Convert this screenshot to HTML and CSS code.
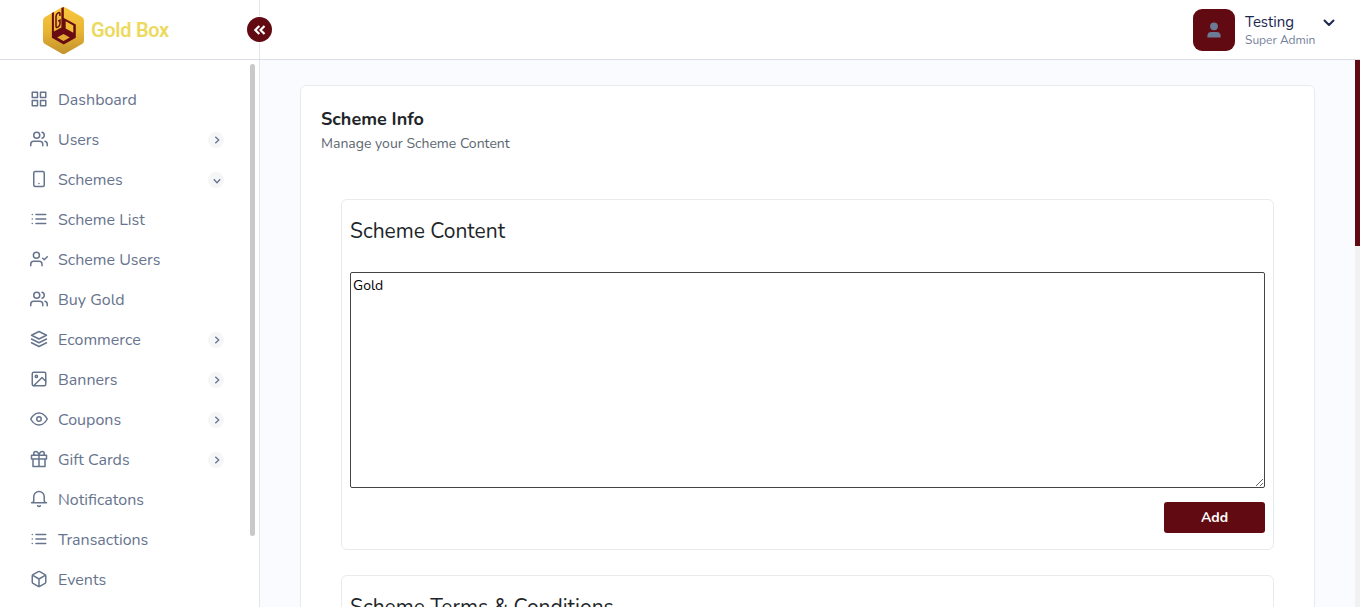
FILE: index.html
```html
<!DOCTYPE html>
<html lang="en">
<head>
<meta charset="utf-8">
<title>Gold Box</title>
<link rel="stylesheet" href="styles.css">
</head>
<body>
<header class="header">
  <div class="brand">
    <svg class="brand-mark" viewBox="0 0 41 47">
      <defs><linearGradient id="gold" x1="0" y1="0" x2="0" y2="1"><stop offset="0" stop-color="#f8c73c"/><stop offset=".5" stop-color="#e9b634"/><stop offset="1" stop-color="#c3922c"/></linearGradient></defs>
      <path d="M18.500.6q2-1.100 4 0l16.500 9.500q2 1.200 2 3.500v19.800q0 2.300-2 3.500l-16.500 9.500q-2 1.100-4 0L2 36.900q-2-1.200-2-3.500V13.600q0-2.300 2-3.500z" fill="url(#gold)"/>
      <path d="M8.900 6l2-1v19.500l7.500-4V1l2.400-1v11l12 6.500v13.300L20.700 37.400 8.900 30.800z" fill="#680b12"/>
      <path d="M22.700 14.300l7.600 4.100v7.300l-7.600-4.100z" fill="#f1bd37"/>
      <path d="M20.500 27l6.300 3.400-6.300 3.500-6.300-3.500z" fill="#e0ad32"/>
      <path d="M16.900 9V6.600q0-1.500-1.700-.7-2.200 1-2.200 3.600v9.400q0 2.200 1.900 1.200 2.100-1.100 2.100-3.400v-3.500l-1.900 1" fill="none" stroke="#680b12" stroke-width="1.500"/>
    </svg>
    <span class="brand-name">Gold Box</span>
  </div>
  <div class="profile">
    <span class="avatar"><svg viewBox="0 0 14 16"><circle cx="7" cy="4.300" r="3.900"/><path d="M.4 15.500v-1.500q0-4 4-4h5.200q4 0 4 4v1.500z"/></svg></span>
    <span class="profile-text"><span class="profile-name">Testing</span><span class="profile-role">Super Admin</span></span>
    <svg class="profile-caret" viewBox="0 0 12 8"><path d="M1.500 1.500L6 6l4.500-4.500"/></svg>
  </div>
  <button class="collapse" aria-label="Collapse menu"><svg viewBox="0 0 12 10"><path d="M5.300.9L1.300 5l4 4.100M10.500.9L6.500 5l4 4.100"/></svg></button>
</header>
<div class="shell">
  <aside class="sidebar">
    <nav class="menu">
      <a class="item"><svg class="icon" viewBox="0 0 24 24"><path d="M3 3h7v7H3zM14 3h7v7h-7zM14 14h7v7h-7zM3 14h7v7H3z"/></svg><span class="label">Dashboard</span></a>
      <a class="item"><svg class="icon" viewBox="0 0 24 24"><path d="M17 21v-2a4 4 0 0 0-4-4H5a4 4 0 0 0-4 4v2M23 21v-2a4 4 0 0 0-3-3.870M16 3.130a4 4 0 0 1 0 7.750"/><circle cx="9" cy="7" r="4"/></svg><span class="label">Users</span><span class="arrow"><svg viewBox="0 0 8 8"><path d="M2.300 .8L5.700 4 2.300 7.200"/></svg></span></a>
      <a class="item"><svg class="icon" viewBox="0 0 24 24"><rect x="5" y="2" width="14" height="20" rx="2"/><path d="M12 18h.01"/></svg><span class="label">Schemes</span><span class="arrow open"><svg viewBox="0 0 8 8"><path d="M2.300 .8L5.700 4 2.300 7.200"/></svg></span></a>
      <a class="item"><svg class="icon" viewBox="0 0 24 24"><path d="M8 6h13M8 12h13M8 18h13M3 6h.01M3 12h.01M3 18h.01"/></svg><span class="label">Scheme List</span></a>
      <a class="item"><svg class="icon" viewBox="0 0 24 24"><path d="M16 21v-2a4 4 0 0 0-4-4H5a4 4 0 0 0-4 4v2M17 11l2 2 4-4"/><circle cx="8.500" cy="7" r="4"/></svg><span class="label">Scheme Users</span></a>
      <a class="item"><svg class="icon" viewBox="0 0 24 24"><path d="M17 21v-2a4 4 0 0 0-4-4H5a4 4 0 0 0-4 4v2M23 21v-2a4 4 0 0 0-3-3.870M16 3.130a4 4 0 0 1 0 7.750"/><circle cx="9" cy="7" r="4"/></svg><span class="label">Buy Gold</span></a>
      <a class="item"><svg class="icon" viewBox="0 0 24 24"><path d="M12 2L2 7l10 5 10-5zM2 17l10 5 10-5M2 12l10 5 10-5"/></svg><span class="label">Ecommerce</span><span class="arrow"><svg viewBox="0 0 8 8"><path d="M2.300 .8L5.700 4 2.300 7.200"/></svg></span></a>
      <a class="item"><svg class="icon" viewBox="0 0 24 24"><rect x="3" y="3" width="18" height="18" rx="2"/><circle cx="8.500" cy="8.500" r="1.500"/><path d="M21 15l-5-5L5 21"/></svg><span class="label">Banners</span><span class="arrow"><svg viewBox="0 0 8 8"><path d="M2.300 .8L5.700 4 2.300 7.200"/></svg></span></a>
      <a class="item"><svg class="icon" viewBox="0 0 24 24"><path d="M1 12s4-8 11-8 11 8 11 8-4 8-11 8-11-8-11-8z"/><circle cx="12" cy="12" r="3"/></svg><span class="label">Coupons</span><span class="arrow"><svg viewBox="0 0 8 8"><path d="M2.300 .8L5.700 4 2.300 7.200"/></svg></span></a>
      <a class="item"><svg class="icon" viewBox="0 0 24 24"><path d="M20 12v10H4V12M2 7h20v5H2zM12 22V7M12 7H7.500a2.500 2.500 0 0 1 0-5C11 2 12 7 12 7zM12 7h4.500a2.500 2.500 0 0 0 0-5C13 2 12 7 12 7z"/></svg><span class="label">Gift Cards</span><span class="arrow"><svg viewBox="0 0 8 8"><path d="M2.300 .8L5.700 4 2.300 7.200"/></svg></span></a>
      <a class="item"><svg class="icon" viewBox="0 0 24 24"><path d="M22 17H2a3 3 0 0 0 3-3V9a7 7 0 0 1 14 0v5a3 3 0 0 0 3 3zM13.730 21a2 2 0 0 1-3.460 0"/></svg><span class="label">Notificatons</span></a>
      <a class="item"><svg class="icon" viewBox="0 0 24 24"><path d="M8 6h13M8 12h13M8 18h13M3 6h.01M3 12h.01M3 18h.01"/></svg><span class="label">Transactions</span></a>
      <a class="item"><svg class="icon" viewBox="0 0 24 24"><path d="M21 16V8a2 2 0 0 0-1-1.730l-7-4a2 2 0 0 0-2 0l-7 4A2 2 0 0 0 3 8v8a2 2 0 0 0 1 1.730l7 4a2 2 0 0 0 2 0l7-4A2 2 0 0 0 21 16zM3.270 6.960L12 12.010l8.730-5.050M12 22.080V12"/></svg><span class="label">Events</span></a>
    </nav>
    <div class="side-thumb"></div>
  </aside>
  <main class="main">
    <section class="card">
      <h1 class="title">Scheme Info</h1>
      <p class="subtitle">Manage your Scheme Content</p>
      <div class="panel">
        <h2 class="panel-title">Scheme Content</h2>
        <textarea class="editor">Gold</textarea>
        <div class="actions"><button class="add">Add</button></div>
      </div>
      <div class="panel">
        <h2 class="panel-title">Scheme Terms &amp; Conditions</h2>
      </div>
    </section>
  </main>
  <div class="page-track"><div class="page-thumb"></div></div>
</div>
</body>
</html>
```
FILE: styles.css
```css
* { box-sizing: border-box; }
body { margin: 0; height: 607px; overflow: hidden; font-family: Nunito, Lato, sans-serif; background: #fafbfe; color: #212529; }
svg { display: block; }
.header { position: relative; display: flex; justify-content: space-between; height: 60px; background: #fff; border-bottom: 1px solid #dbdfe5; }
.brand { display: flex; align-items: center; width: 260px; padding-left: 43px; gap: 7px; border-right: 1px solid #e3e5e9; }
.brand-mark { width: 41px; height: 47px; margin-top: 1px; }
.brand-name { font: 600 20px/24px Roboto, sans-serif; color: #ecda5e; letter-spacing: -.3px; margin-top: 1px; }
.collapse { position: absolute; left: 247px; top: 17px; width: 25px; height: 25px; border: 0; border-radius: 50%; padding: 0; background: #620a12; display: grid; place-items: center; }
.collapse svg { width: 12px; height: 10px; fill: none; stroke: #fff; stroke-width: 2.200; }
.profile { display: flex; padding: 9px 25px 0 0; }
.avatar { width: 42px; height: 42px; border-radius: 9px; background: #620a12; display: grid; place-items: center; }
.avatar svg { width: 14px; height: 16px; margin-top: -1px; fill: #6c7a95; }
.profile-text { display: flex; flex-direction: column; width: 77px; margin-left: 10px; padding-top: 3px; }
.profile-name { font-size: 15px; line-height: 20px; color: #1b2850; }
.profile-role { font-size: 12px; line-height: 16px; color: #74809a; white-space: nowrap; }
.profile-caret { width: 12px; height: 8px; margin: 10px 0 0 1px; fill: none; stroke: #1b2850; stroke-width: 2; stroke-linecap: round; stroke-linejoin: round; }
.shell { display: flex; height: 547px; }
.sidebar { display: flex; justify-content: space-between; width: 260px; flex: none; overflow: hidden; background: #fff; border-right: 1px solid #e3e5e9; padding-right: 4px; }
.menu { width: 224px; padding: 20px 0 0 30px; }
.item { display: flex; align-items: center; height: 40px; color: #67748e; font-size: 16px; line-height: 20px; }
.icon { width: 18px; height: 18px; margin: -2px 10px 0 0; fill: none; stroke: #67748e; stroke-width: 2; stroke-linecap: round; stroke-linejoin: round; }
.label { white-space: nowrap; }
.arrow { width: 16px; height: 16px; margin-left: auto; border-radius: 50%; background: #f5f6f8; display: grid; place-items: center; }
.arrow svg { width: 8px; height: 8px; margin: -1px 0 0 1px; fill: none; stroke: #67748e; stroke-width: 1.300; }
.arrow.open svg { transform: rotate(90deg); margin: 2px 0 0 1px; }
.side-thumb { width: 5px; height: 472px; margin-top: 4px; border-radius: 3px; background: #c9c9c9; }
.main { flex: 1; padding: 25px 40px 0; overflow: hidden; }
.card { height: 800px; padding: 20px 40px 0; background: #fff; border: 1px solid #e8ebed; border-radius: 6px; }
.title { margin: 0 -20px; font-size: 18px; line-height: 27px; font-weight: 700; }
.subtitle { margin: 0 -20px; font-size: 14px; line-height: 21px; color: #5b6670; }
.panel { height: 351px; margin-top: 45px; padding: 16px 8px; border: 1px solid #e8ebed; border-radius: 6px; }
.panel + .panel { margin-top: 25px; }
.panel-title { margin: 0; font-size: 21px; line-height: 30px; font-weight: 400; }
.editor { display: block; width: 100%; height: 216px; margin-top: 26px; padding: 2px; border: 1px solid #444; border-radius: 2px; font: 14px/21px Nunito, Lato, sans-serif; color: #000; }
.actions { display: flex; justify-content: flex-end; margin-top: 14px; }
.add { width: 101px; height: 31px; border: 0; border-radius: 3px; background: #620a12; color: #fff; font: 700 14px/20px Nunito, Lato, sans-serif; }
.page-track { width: 5px; background: #f1f1f1; }
.page-thumb { height: 186px; background: #620a12; }
```
